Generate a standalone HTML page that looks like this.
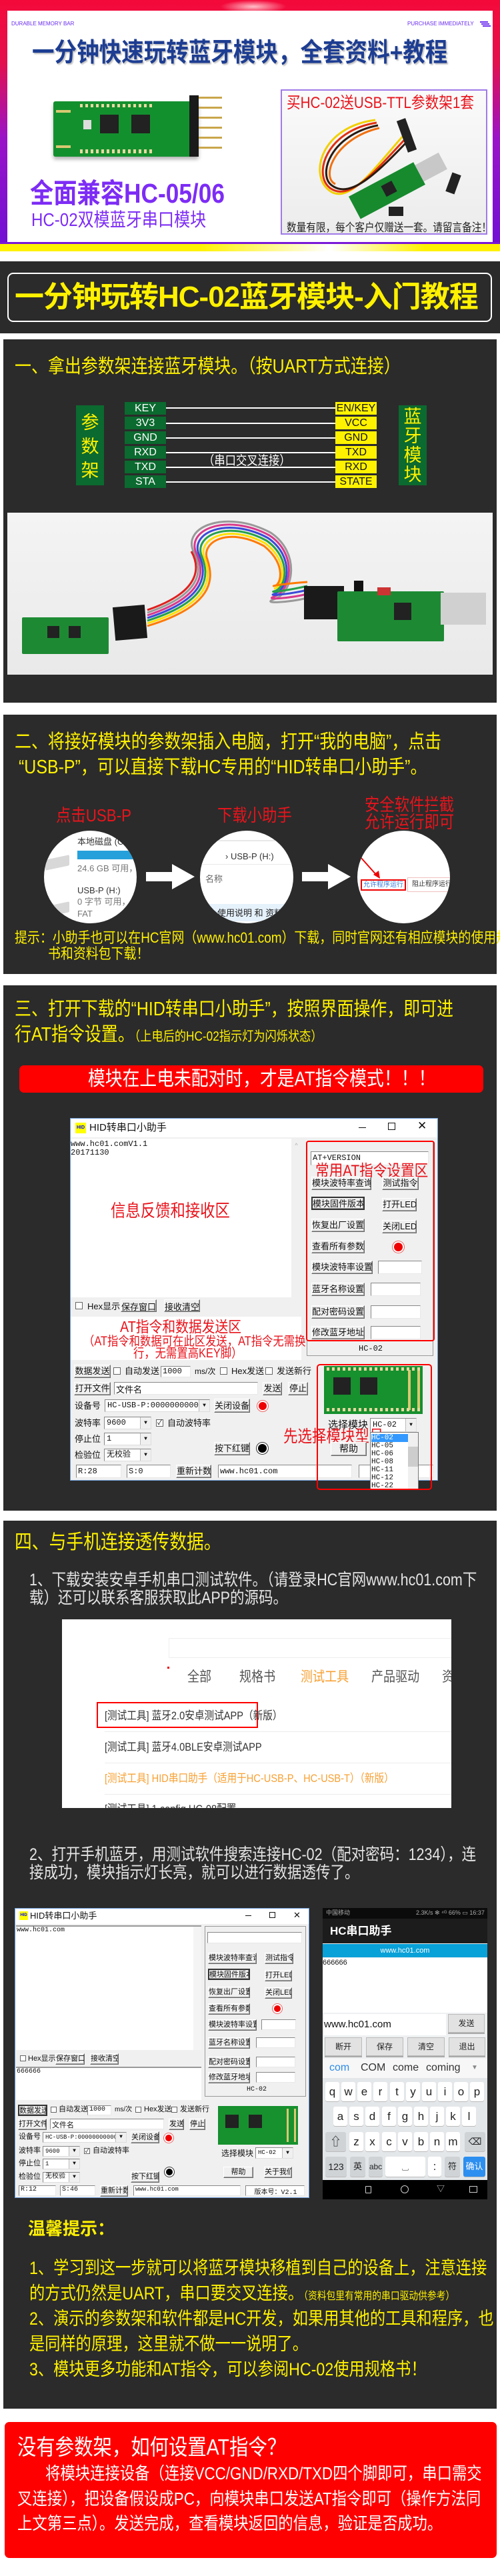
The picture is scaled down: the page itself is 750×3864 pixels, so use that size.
<!DOCTYPE html>
<html><head><meta charset="utf-8">
<style>
*{margin:0;padding:0;box-sizing:border-box}
body{width:750px;height:3864px;position:relative;background:#fff;font-family:"Liberation Sans","Noto Sans CJK SC",sans-serif;overflow:hidden}
.a{position:absolute;white-space:nowrap;line-height:1}
.s{transform:scaleX(.86);transform-origin:0 0}
.y{color:#fff100}
.dk{position:absolute;background:#2b2b2b}
.pin{position:absolute;width:62px;height:19px;font-size:16px;line-height:19px;text-align:center}
.pl{background:#0b6a2f;color:#fff}
.pr{background:#fff200;color:#111}
.ln{position:absolute;height:2px;background:#fff}
.btn{position:absolute;background:#f0f0f0;border:1px solid;border-color:#fff #6a6a6a #6a6a6a #fff;box-shadow:inset -1px -1px 0 #a0a0a0;font-size:13px;text-align:center;color:#111;white-space:nowrap;overflow:hidden}
.inp{position:absolute;background:#fff;border:1px solid;border-color:#888 #e8e8e8 #e8e8e8 #888;font-size:12px;font-family:"Liberation Mono","Noto Sans CJK SC",monospace;padding-left:2px;white-space:nowrap;overflow:hidden;color:#111}
.lb{position:absolute;font-size:13px;color:#111;white-space:nowrap;line-height:1}
.cb{position:absolute;width:11px;height:11px;background:#fff;border:1px solid #666;font-size:10px;line-height:9px;text-align:center}
.cmb{position:absolute;background:#fff;border:1px solid;border-color:#888 #ddd #ddd #888;font-size:12px;font-family:"Liberation Mono","Noto Sans CJK SC",monospace;padding-left:3px;white-space:nowrap;overflow:hidden;color:#111}
.cmb:after{content:"▼";position:absolute;right:0;top:0;bottom:0;width:15px;background:#f0f0f0;border-left:1px solid #bbb;font-size:8px;text-align:center;display:flex;align-items:center;justify-content:center}
.rd{position:absolute;border-radius:50%;background:#e00;box-shadow:0 0 0 2px #fff,0 0 0 3px #e66}
.key{position:absolute;background:#fff;border-radius:3px;box-shadow:0 1px 0 #bbb;font-size:17px;text-align:center;color:#222}
.gk{background:#cfd3d6}
.pb{position:absolute;background:#e2e2e2;border:1px solid #bbb;font-size:12px;text-align:center;color:#222;box-shadow:0 2px 0 #aaa}
</style></head><body>

<div class="a" style="left:0;top:0;width:750px;height:377px;background:linear-gradient(180deg,#f40a3a 0%,#e3104e 25%,#9a12c8 55%,#6e10d4 100%)"></div>
<div class="a" style="left:330px;top:0;width:100px;height:20px;background:radial-gradient(ellipse at center,#ffc0c8 0%,rgba(255,80,100,0) 70%)"></div>
<div class="a" style="left:0;top:363px;width:750px;height:3px;background:#7a18d8"></div>
<div class="a" style="left:0;top:366px;width:750px;height:11px;background:linear-gradient(90deg,#fff200 0%,#fff200 40%,#fff 66%,#fff200 85%,#fff200 100%)"></div>
<div class="a" style="left:11px;top:16px;width:728px;height:347px;background:#fff"></div>
<div class="a" style="left:17px;top:32px;font-size:8px;color:#6a2cf0">DURABLE MEMORY BAR</div>
<div class="a" style="left:611px;top:32px;font-size:8px;color:#6a2cf0">PURCHASE IMMEDIATELY</div>
<div class="a" style="left:720px;top:32px;width:12px;height:2px;background:#6a2cf0;box-shadow:2px 3px 0 #6a2cf0,4px 6px 0 #6a2cf0"></div>
<div class="a s" style="left:48px;top:60px;font-size:39px;font-weight:bold;color:#1d3d92;text-shadow:2px 2px 2px rgba(0,0,0,.25)">一分钟快速玩转蓝牙模块，全套资料+教程</div>

<div class="a" style="left:80px;top:152px;width:218px;height:83px;background:#13902e;border-radius:3px;box-shadow:0 4px 6px rgba(0,0,0,.3)"></div>
<div class="a" style="left:84px;top:165px;width:22px;height:57px;border:4px solid #d9c872;border-left:none;border-right:none"></div>
<div class="a" style="left:150px;top:172px;width:28px;height:28px;background:#222"></div>
<div class="a" style="left:197px;top:172px;width:28px;height:28px;background:#222"></div>
<div class="a" style="left:125px;top:180px;width:12px;height:14px;background:#ddd"></div>
<div class="a" style="left:120px;top:224px;width:110px;height:6px;background:repeating-linear-gradient(90deg,#e8d9a0 0 4px,transparent 4px 8px)"></div>
<div class="a" style="left:120px;top:156px;width:110px;height:5px;background:repeating-linear-gradient(90deg,#e8d9a0 0 4px,transparent 4px 8px)"></div>
<div class="a" style="left:284px;top:143px;width:14px;height:92px;background:#1a1a1a"></div>
<div class="a" style="left:298px;top:145px;width:35px;height:88px;background:repeating-linear-gradient(180deg,#c8a64a 0 3px,transparent 3px 15px)"></div>

<div class="a s" style="left:45px;top:270px;font-size:41px;font-weight:bold;color:#7d2cf5">全面兼容HC-05/06</div>
<div class="a s" style="left:47px;top:316px;font-size:28px;color:#7d2cf5">HC-02双模蓝牙串口模块</div>

<div class="a" style="left:421px;top:134px;width:310px;height:218px;border:2px solid #9f7ae8;background:linear-gradient(180deg,#fafafa,#ececec)"></div>
<div class="a s" style="left:430px;top:143px;font-size:24px;color:#e8141c">买HC-02送USB-TTL参数架1套</div>
<svg class="a" style="left:423px;top:170px" width="306" height="160" viewBox="0 0 306 160">
<path d="M140 10 C60 20 40 90 70 115 C100 140 140 80 185 30" fill="none" stroke="#f2d000" stroke-width="3"/>
<path d="M142 14 C66 26 46 92 72 112 C102 134 142 84 188 35" fill="none" stroke="#e03010" stroke-width="3"/>
<path d="M144 18 C72 32 52 94 76 109 C104 128 144 88 190 40" fill="none" stroke="#2a1a10" stroke-width="3"/>
<path d="M146 22 C78 38 58 96 80 106" fill="none" stroke="#f07010" stroke-width="3"/>
<rect x="180" y="8" width="14" height="50" fill="#222" transform="rotate(-20 187 33)"/>
<g transform="rotate(-28 160 110)"><rect x="100" y="95" width="110" height="38" fill="#178a2e"/><rect x="210" y="100" width="40" height="28" fill="#c8c8c8"/><rect x="150" y="104" width="18" height="18" fill="#222"/></g>
<rect x="250" y="90" width="14" height="30" fill="#222" transform="rotate(20 257 105)"/>
<rect x="160" y="140" width="22" height="14" fill="#222"/>
</svg>
<div class="a s" style="left:430px;top:333px;font-size:17px;color:#222">数量有限，每个客户仅赠送一套。请留言备注！</div>

<div class="dk" style="left:0;top:392px;width:750px;height:108px"></div>
<div class="a" style="left:11px;top:409px;width:727px;height:74px;border:2px solid #fff;border-radius:9px"></div>
<div class="a" style="left:22px;top:424px;font-size:44px;font-weight:bold;color:#fff100;letter-spacing:-1px">一分钟玩转HC-02蓝牙模块-入门教程</div>

<div class="dk" style="left:5px;top:509px;width:740px;height:545px"></div>
<div class="a s y" style="left:22px;top:536px;font-size:29px">一、拿出参数架连接蓝牙模块。（按UART方式连接）</div>
<div class="a" style="left:114px;top:608px;width:42px;height:120px;background:#0b6a2f;color:#fff100;font-size:27px;line-height:36px;text-align:center;padding-top:8px;white-space:normal">参<br>数<br>架</div>
<div class="a" style="left:598px;top:608px;width:42px;height:120px;background:#0b6a2f;color:#fff100;font-size:27px;line-height:29px;text-align:center;padding-top:3px;white-space:normal">蓝<br>牙<br>模<br>块</div>
<div class="pin pl" style="left:187px;top:603px">KEY</div>
<div class="pin pl" style="left:187px;top:625px">3V3</div>
<div class="pin pl" style="left:187px;top:647px">GND</div>
<div class="pin pl" style="left:187px;top:669px">RXD</div>
<div class="pin pl" style="left:187px;top:691px">TXD</div>
<div class="pin pl" style="left:187px;top:713px">STA</div>
<div class="pin pr" style="left:503px;top:603px">EN/KEY</div>
<div class="pin pr" style="left:503px;top:625px">VCC</div>
<div class="pin pr" style="left:503px;top:647px">GND</div>
<div class="pin pr" style="left:503px;top:669px">TXD</div>
<div class="pin pr" style="left:503px;top:691px">RXD</div>
<div class="pin pr" style="left:503px;top:713px">STATE</div>
<div class="ln" style="left:249px;top:611px;width:254px"></div>
<div class="ln" style="left:249px;top:634px;width:254px"></div>
<div class="ln" style="left:249px;top:656px;width:254px"></div>
<div class="ln" style="left:249px;top:678px;width:254px"></div>
<div class="ln" style="left:249px;top:700px;width:254px"></div>
<div class="ln" style="left:249px;top:722px;width:254px"></div>
<div class="a s" style="left:305px;top:682px;font-size:19px;color:#fff">（串口交叉连接）</div>

<div class="a" style="left:11px;top:769px;width:728px;height:243px;background:linear-gradient(180deg,#f4f4f4,#e9e9e9)"></div>
<svg class="a" style="left:11px;top:769px" width="728" height="243" viewBox="0 0 728 243">
<g fill="none" stroke-width="3">
<path d="M210 150 C300 120 290 80 280 60 C260 20 330 -5 395 30 C440 60 430 120 400 130 C380 137 420 135 450 128" stroke="#999"/>
<path d="M210 154 C302 124 294 84 284 62 C266 25 330 0 393 34 C436 62 426 118 400 126 C385 131 420 129 450 122" stroke="#d8398c"/>
<path d="M210 158 C304 128 298 88 288 64 C272 30 330 5 391 38 C432 66 422 116 400 122 C390 125 420 123 450 116" stroke="#3a4ad8"/>
<path d="M210 162 C306 132 302 92 292 66 C278 35 330 10 389 42 C428 70 418 114 400 118 C392 120 420 117 450 110" stroke="#26a04a"/>
<path d="M210 166 C308 136 306 96 296 68 C284 40 330 15 387 46 C424 74 414 112 400 114" stroke="#ffe000"/>
<path d="M210 170 C310 140 310 100 300 70 C290 45 330 20 385 50 C420 78 410 110 400 110 C395 110 420 106 450 104" stroke="#ff7a00"/>
<path d="M210 146 C298 116 286 76 276 58" stroke="#e02020"/>
</g>
<rect x="22" y="157" width="130" height="55" rx="2" fill="#1d8a33"/>
<rect x="60" y="170" width="18" height="18" fill="#222"/><rect x="92" y="170" width="18" height="18" fill="#222"/>
<rect x="160" y="140" width="48" height="50" fill="#1a1a1a" transform="rotate(-5 184 165)"/>
<rect x="445" y="110" width="60" height="50" fill="#1a1a1a"/>
<rect x="520" y="102" width="14" height="70" fill="#111"/>
<rect x="495" y="118" width="160" height="75" rx="2" fill="#1d8a33"/>
<rect x="580" y="135" width="26" height="26" fill="#222"/>
<rect x="555" y="112" width="20" height="12" fill="#c33"/>
<rect x="650" y="120" width="68" height="48" fill="#d0d0d0"/>
</svg>

<div class="dk" style="left:5px;top:1072px;width:740px;height:389px"></div>
<div class="a s y" style="left:22px;top:1099px;font-size:29px">二、将接好模块的参数架插入电脑，打开“我的电脑”，点击</div>
<div class="a s y" style="left:28px;top:1137px;font-size:29px">“USB-P”，可以直接下载HC专用的“HID转串口小助手”。</div>
<div class="a s" style="left:84px;top:1210px;font-size:26px;color:#e8141c">点击USB-P</div>
<div class="a s" style="left:326px;top:1210px;font-size:26px;color:#e8141c">下载小助手</div>
<div class="a s" style="left:547px;top:1194px;font-size:26px;color:#e8141c">安全软件拦截</div>
<div class="a s" style="left:547px;top:1220px;font-size:26px;color:#e8141c">允许运行即可</div>
<div class="a" style="left:66px;top:1246px;width:139px;height:139px;border-radius:50%;background:#fff;overflow:hidden">
 <div class="a" style="left:50px;top:10px;font-size:13px;color:#333">本地磁盘 (C:)</div>
 <div class="a" style="left:50px;top:30px;width:90px;height:13px;background:#26a0da"></div>
 <div class="a" style="left:50px;top:50px;font-size:13px;color:#777">24.6 GB 可用，共</div>
 <div class="a" style="left:50px;top:83px;font-size:13px;color:#333">USB-P (H:)</div>
 <div class="a" style="left:50px;top:100px;font-size:13px;color:#777">0 字节 可用，共</div>
 <div class="a" style="left:50px;top:118px;font-size:13px;color:#777">FAT</div>
 <div class="a" style="left:2px;top:40px;width:36px;height:16px;background:#d8d8d8;border-radius:2px;transform:skewY(-12deg)"></div>
 <div class="a" style="left:2px;top:110px;width:36px;height:16px;background:#d8d8d8;border-radius:2px;transform:skewY(-12deg)"></div>
</div>
<div class="a" style="left:300px;top:1246px;width:140px;height:139px;border-radius:50%;background:#fff;overflow:hidden">
 <div class="a" style="left:0;top:14px;width:140px;height:2px;background:#e8e8e8"></div>
 <div class="a" style="left:38px;top:32px;font-size:13px;color:#333">› USB-P (H:)</div>
 <div class="a" style="left:0;top:50px;width:140px;height:1px;background:#e8e8e8"></div>
 <div class="a" style="left:8px;top:66px;font-size:13px;color:#666">名称</div>
 <div class="a" style="left:0;top:110px;width:140px;height:26px;background:#e5f1fb"></div>
 <div class="a" style="left:26px;top:117px;font-size:13px;color:#222">使用说明 和 资料下载</div>
</div>
<div class="a" style="left:536px;top:1246px;width:139px;height:139px;border-radius:50%;background:#fff;overflow:hidden">
 <div class="a" style="left:5px;top:73px;width:68px;height:17px;border:2px solid #e00;font-size:10px;color:#3a7ad8;text-align:center;line-height:13px">允许程序运行</div>
 <div class="a" style="left:75px;top:70px;width:70px;height:22px;border:1px solid #f0c0c0;font-size:10px;color:#333;padding:5px 0 0 6px">阻止程序运行</div>
 <svg class="a" style="left:0;top:0" width="139" height="139"><line x1="5" y1="40" x2="30" y2="68" stroke="#e00" stroke-width="2"/><polygon points="24,66 34,72 32,60" fill="#e00"/></svg>
</div>
<svg class="a" style="left:219px;top:1296px" width="75" height="40"><polygon points="0,12 39,12 39,0 73,19 39,38 39,26 0,26" fill="#fff"/></svg>
<svg class="a" style="left:453px;top:1296px" width="75" height="40"><polygon points="0,12 39,12 39,0 73,19 39,38 39,26 0,26" fill="#fff"/></svg>
<div class="a s y" style="left:22px;top:1396px;font-size:22px">提示：小助手也可以在HC官网（www.hc01.com）下载，同时官网还有相应模块的使用规格</div>
<div class="a s y" style="left:72px;top:1420px;font-size:22px">书和资料包下载！</div>

<div class="dk" style="left:5px;top:1478px;width:740px;height:788px"></div>
<div class="a s y" style="left:22px;top:1500px;font-size:29px">三、打开下载的“HID转串口小助手”，按照界面操作，即可进</div>
<div class="a s y" style="left:22px;top:1538px;font-size:29px">行AT指令设置。<span style="font-size:20px">（上电后的HC-02指示灯为闪烁状态）</span></div>
<div class="a" style="left:29px;top:1598px;width:696px;height:41px;background:#fe0000;border-radius:7px"></div>
<div class="a s" style="left:132px;top:1604px;font-size:30px;color:#fff">模块在上电未配对时，才是AT指令模式！！！</div>

<div class="a" style="left:105px;top:1677px;width:552px;height:544px;background:#f0f0f0;border:1px solid #6f9fd8"></div>
<div class="a" style="left:106px;top:1678px;width:550px;height:28px;background:#fff"></div>
<div class="a" style="left:113px;top:1684px;width:16px;height:16px;background:#ff0;color:#00f;font-size:7px;line-height:16px;text-align:center;font-weight:bold">HID</div>
<div class="a" style="left:134px;top:1684px;font-size:15px;color:#111">HID转串口小助手</div>
<div class="a" style="left:538px;top:1691px;width:11px;height:1px;background:#111"></div>
<div class="a" style="left:582px;top:1684px;width:11px;height:11px;border:1px solid #111"></div>
<div class="a" style="left:626px;top:1680px;font-size:17px;color:#111">✕</div>
<div class="a" style="left:106px;top:1708px;width:346px;height:238px;background:#fff"></div>
<div class="a" style="left:437px;top:1708px;width:15px;height:238px;background:#f0f0f0;font-size:9px;color:#aaa;text-align:center;padding-top:6px">^</div>
<div class="a" style="left:106px;top:1710px;font-size:12px;font-family:'Liberation Mono',monospace;color:#111;line-height:13px;white-space:pre">www.hc01.comV1.1
20171130</div>
<div class="a s" style="left:166px;top:1803px;font-size:26px;color:#e8141c">信息反馈和接收区</div>
<div class="cb" style="left:113px;top:1953px"></div>
<div class="lb" style="left:131px;top:1953px">Hex显示</div>
<div class="btn" style="left:181px;top:1949px;width:54px;height:19px">保存窗口</div>
<div class="btn" style="left:246px;top:1949px;width:54px;height:19px">接收清空</div>
<div class="a" style="left:106px;top:1975px;width:346px;height:65px;background:#fff"></div>
<div class="a s" style="left:180px;top:1979px;font-size:23px;color:#e8141c">AT指令和数据发送区</div>
<div class="a s" style="left:125px;top:2003px;font-size:19px;color:#e8141c">（AT指令和数据可在此区发送，AT指令无需换</div>
<div class="a s" style="left:200px;top:2021px;font-size:19px;color:#e8141c">行，无需置高KEY脚）</div>

<div class="a" style="left:460px;top:1712px;width:190px;height:322px;border:1px solid #999"></div>
<div class="a" style="left:459px;top:1711px;width:193px;height:301px;border:2px solid #f00;border-radius:4px"></div>
<div class="inp" style="left:466px;top:1727px;width:177px;height:21px;line-height:19px">AT+VERSION</div>
<div class="a s" style="left:473px;top:1745px;font-size:24px;color:#e8141c">常用AT指令设置区</div>
<div class="btn" style="left:467px;top:1765px;width:90px;height:20px;line-height:18px">模块波特率查询</div>
<div class="btn" style="left:573px;top:1765px;width:55px;height:20px;line-height:18px">测试指令</div>
<div class="btn" style="left:467px;top:1795px;width:80px;height:20px;line-height:18px;border:2px solid #333">模块固件版本</div>
<div class="btn" style="left:573px;top:1797px;width:52px;height:20px;line-height:18px">打开LED</div>
<div class="btn" style="left:467px;top:1828px;width:80px;height:20px;line-height:18px">恢复出厂设置</div>
<div class="btn" style="left:573px;top:1830px;width:52px;height:20px;line-height:18px">关闭LED</div>
<div class="btn" style="left:467px;top:1860px;width:80px;height:20px;line-height:18px">查看所有参数</div>
<div class="rd" style="left:591px;top:1864px;width:13px;height:13px"></div>
<div class="btn" style="left:467px;top:1891px;width:92px;height:20px;line-height:18px">模块波特率设置</div>
<div class="inp" style="left:567px;top:1891px;width:66px;height:20px"></div>
<div class="btn" style="left:467px;top:1924px;width:80px;height:20px;line-height:18px">蓝牙名称设置</div>
<div class="inp" style="left:556px;top:1924px;width:75px;height:20px"></div>
<div class="btn" style="left:467px;top:1958px;width:80px;height:20px;line-height:18px">配对密码设置</div>
<div class="inp" style="left:556px;top:1958px;width:75px;height:20px"></div>
<div class="btn" style="left:467px;top:1989px;width:80px;height:20px;line-height:18px">修改蓝牙地址</div>
<div class="inp" style="left:556px;top:1989px;width:75px;height:20px"></div>
<div class="lb" style="left:538px;top:2017px;font-family:'Liberation Mono',monospace;font-size:12px">HC-02</div>

<div class="btn" style="left:111px;top:2047px;width:55px;height:20px;line-height:18px">数据发送</div>
<div class="cb" style="left:170px;top:2051px"></div>
<div class="lb" style="left:187px;top:2050px">自动发送</div>
<div class="inp" style="left:241px;top:2049px;width:45px;height:17px">1000</div>
<div class="lb" style="left:292px;top:2051px;font-size:12px">ms/次</div>
<div class="cb" style="left:330px;top:2051px"></div>
<div class="lb" style="left:347px;top:2050px">Hex发送</div>
<div class="cb" style="left:398px;top:2051px"></div>
<div class="lb" style="left:415px;top:2050px">发送新行</div>
<div class="btn" style="left:111px;top:2073px;width:55px;height:20px;line-height:18px">打开文件</div>
<div class="inp" style="left:171px;top:2073px;width:216px;height:19px;font-size:13px">文件名</div>
<div class="btn" style="left:394px;top:2073px;width:29px;height:20px;line-height:18px">发送</div>
<div class="btn" style="left:432px;top:2073px;width:30px;height:20px;line-height:18px">停止</div>
<div class="lb" style="left:112px;top:2102px">设备号</div>
<div class="cmb" style="left:157px;top:2099px;width:158px;height:19px;line-height:17px">HC-USB-P:000000000007</div>
<div class="btn" style="left:321px;top:2098px;width:54px;height:21px;line-height:19px">关闭设备</div>
<div class="rd" style="left:388px;top:2103px;width:12px;height:12px"></div>
<div class="lb" style="left:112px;top:2128px">波特率</div>
<div class="cmb" style="left:156px;top:2125px;width:71px;height:19px;line-height:17px">9600</div>
<div class="cb" style="left:234px;top:2129px">✓</div>
<div class="lb" style="left:251px;top:2128px">自动波特率</div>
<div class="lb" style="left:112px;top:2152px">停止位</div>
<div class="cmb" style="left:156px;top:2149px;width:71px;height:19px;line-height:17px">1</div>
<div class="lb" style="left:112px;top:2176px">检验位</div>
<div class="cmb" style="left:156px;top:2173px;width:71px;height:19px;line-height:17px">无校验</div>
<div class="btn" style="left:321px;top:2163px;width:54px;height:20px;line-height:18px">按下红键</div>
<div class="a" style="left:387px;top:2166px;width:13px;height:13px;border-radius:50%;background:#000;box-shadow:0 0 0 2px #fff,0 0 0 3px #333"></div>
<div class="inp" style="left:114px;top:2197px;width:68px;height:20px;line-height:18px">R:28</div>
<div class="inp" style="left:190px;top:2197px;width:66px;height:20px;line-height:18px">S:0</div>
<div class="btn" style="left:264px;top:2197px;width:53px;height:20px;line-height:18px">重新计数</div>
<div class="inp" style="left:327px;top:2197px;width:201px;height:20px;line-height:18px">www.hc01.com</div>
<div class="inp" style="left:538px;top:2197px;width:112px;height:20px"></div>
<div class="a" style="left:486px;top:2049px;width:148px;height:72px;background:#17902e"></div>
<div class="a" style="left:500px;top:2066px;width:26px;height:26px;background:#222"></div>
<div class="a" style="left:540px;top:2066px;width:26px;height:26px;background:#222"></div>
<div class="a" style="left:612px;top:2055px;width:18px;height:60px;border:4px solid #d9c872;border-top:none;border-bottom:none"></div>
<div class="a" style="left:490px;top:2051px;width:140px;height:5px;background:repeating-linear-gradient(90deg,#e8d9a0 0 4px,transparent 4px 8px)"></div>
<div class="a" style="left:490px;top:2112px;width:140px;height:5px;background:repeating-linear-gradient(90deg,#e8d9a0 0 4px,transparent 4px 8px)"></div>
<div class="lb" style="left:492px;top:2130px;font-size:15px">选择模块</div>
<div class="cmb" style="left:555px;top:2127px;width:70px;height:21px;line-height:19px">HC-02</div>
<div class="a s" style="left:425px;top:2143px;font-size:25px;color:#e8141c">先选择模块型号</div>
<div class="btn" style="left:496px;top:2163px;width:54px;height:21px;line-height:19px;font-size:14px">帮助</div>
<div class="a" style="left:555px;top:2148px;width:73px;height:86px;background:#fff;border:1px solid #777;font-family:'Liberation Mono',monospace;font-size:11px;line-height:12px;padding:2px 0 0 1px;white-space:pre;color:#111"><span style="background:#3399ff;color:#fff;display:inline-block;width:55px">HC-02</span>
HC-05
HC-06
HC-08
HC-11
HC-12
HC-22</div>
<div class="a" style="left:612px;top:2149px;width:15px;height:84px;background:#f0f0f0"></div>
<div class="a" style="left:612px;top:2170px;width:15px;height:30px;background:#cdcdcd"></div>
<div class="a" style="left:475px;top:2046px;width:173px;height:189px;border:2px solid #f00;border-radius:5px"></div>

<div class="dk" style="left:5px;top:2281px;width:740px;height:1332px"></div>
<div class="a s y" style="left:22px;top:2299px;font-size:30px">四、与手机连接透传数据。</div>
<div class="a s" style="left:44px;top:2358px;font-size:25px;color:#e4e4e4">1、下载安装安卓手机串口测试软件。（请登录HC官网www.hc01.com下</div>
<div class="a s" style="left:44px;top:2385px;font-size:25px;color:#e4e4e4">载）还可以联系客服获取此APP的源码。</div>
<div class="a" style="left:93px;top:2429px;width:584px;height:283px;background:#fff;overflow:hidden">
 <div class="a" style="left:160px;top:28px;width:430px;height:30px;border:1px solid #eee"></div>
 <div class="a" style="left:158px;top:71px;width:3px;height:3px;background:#e00"></div>
 <div class="a s" style="left:188px;top:76px;font-size:21px;color:#555">全部</div>
 <div class="a s" style="left:266px;top:76px;font-size:21px;color:#555">规格书</div>
 <div class="a s" style="left:358px;top:76px;font-size:21px;color:#f7a033">测试工具</div>
 <div class="a s" style="left:464px;top:76px;font-size:21px;color:#555">产品驱动</div>
 <div class="a s" style="left:570px;top:76px;font-size:21px;color:#555">资</div>
 <div class="a" style="left:52px;top:124px;width:242px;height:39px;border:2px solid #f00"></div>
 <div class="a s" style="left:64px;top:136px;font-size:17px;color:#333">[测试工具] 蓝牙2.0安卓测试APP（新版）</div>
 <div class="a" style="left:64px;top:168px;width:520px;height:1px;background:#ececec"></div>
 <div class="a s" style="left:64px;top:183px;font-size:17px;color:#333">[测试工具] 蓝牙4.0BLE安卓测试APP</div>
 <div class="a" style="left:64px;top:215px;width:520px;height:1px;background:#ececec"></div>
 <div class="a s" style="left:64px;top:230px;font-size:17px;color:#f7a033">[测试工具] HID串口助手（适用于HC-USB-P、HC-USB-T）（新版）</div>
 <div class="a" style="left:64px;top:262px;width:520px;height:1px;background:#ececec"></div>
 <div class="a s" style="left:64px;top:276px;font-size:17px;color:#333">[测试工具] 1.config HC-08配置</div>
</div>
<div class="a s" style="left:44px;top:2770px;font-size:25px;color:#e4e4e4">2、打开手机蓝牙，用测试软件搜索连接HC-02（配对密码：1234），连</div>
<div class="a s" style="left:44px;top:2797px;font-size:25px;color:#e4e4e4">接成功，模块指示灯长亮，就可以进行数据透传了。</div>

<div class="a" style="left:22px;top:2862px;width:442px;height:435px;background:#f0f0f0;border:1px solid #6f9fd8"></div>
<div class="a" style="left:23px;top:2863px;width:440px;height:23px;background:#fff"></div>
<div class="a" style="left:29px;top:2867px;width:13px;height:13px;background:#ff0;color:#00f;font-size:6px;line-height:13px;text-align:center;font-weight:bold">HID</div>
<div class="a" style="left:45px;top:2867px;font-size:13px;color:#111">HID转串口小助手</div>
<div class="a" style="left:368px;top:2873px;width:9px;height:1px;background:#111"></div>
<div class="a" style="left:404px;top:2868px;width:9px;height:9px;border:1px solid #111"></div>
<div class="a" style="left:440px;top:2866px;font-size:13px;color:#111">✕</div>
<div class="a" style="left:24px;top:2888px;width:278px;height:187px;background:#fff;border-top:2px solid #999"></div>
<div class="a" style="left:290px;top:2890px;width:12px;height:185px;background:#f4f4f4"></div>
<div class="a" style="left:25px;top:2891px;font-size:10px;font-family:'Liberation Mono',monospace;color:#111">www.hc01.com</div>
<div class="cb" style="left:30px;top:3083px;width:9px;height:9px"></div>
<div class="lb" style="left:42px;top:3083px;font-size:11px">Hex显示</div>
<div class="btn" style="left:83px;top:3080px;width:44px;height:17px;font-size:11px;line-height:15px">保存窗口</div>
<div class="btn" style="left:135px;top:3080px;width:43px;height:17px;font-size:11px;line-height:15px">接收清空</div>
<div class="a" style="left:24px;top:3100px;width:278px;height:50px;background:#fff;border-top:2px solid #999"></div>
<div class="a" style="left:25px;top:3103px;font-size:10px;font-family:'Liberation Mono',monospace;color:#111">666666</div>
<div class="a" style="left:307px;top:2889px;width:152px;height:256px;border:1px solid #999"></div>
<div class="inp" style="left:311px;top:2898px;width:142px;height:17px"></div>
<div class="btn" style="left:312px;top:2929px;width:73px;height:17px;font-size:11px;line-height:15px">模块波特率查询</div>
<div class="btn" style="left:397px;top:2929px;width:43px;height:17px;font-size:11px;line-height:15px">测试指令</div>
<div class="btn" style="left:312px;top:2953px;width:63px;height:17px;font-size:11px;line-height:14px;border:2px solid #333">模块固件版本</div>
<div class="btn" style="left:397px;top:2955px;width:41px;height:17px;font-size:11px;line-height:15px">打开LED</div>
<div class="btn" style="left:312px;top:2980px;width:63px;height:17px;font-size:11px;line-height:15px">恢复出厂设置</div>
<div class="btn" style="left:397px;top:2981px;width:41px;height:17px;font-size:11px;line-height:15px">关闭LED</div>
<div class="btn" style="left:312px;top:3005px;width:63px;height:17px;font-size:11px;line-height:15px">查看所有参数</div>
<div class="rd" style="left:411px;top:3008px;width:10px;height:10px"></div>
<div class="btn" style="left:312px;top:3029px;width:73px;height:17px;font-size:11px;line-height:15px">模块波特率设置</div>
<div class="inp" style="left:392px;top:3029px;width:52px;height:16px"></div>
<div class="btn" style="left:312px;top:3056px;width:63px;height:17px;font-size:11px;line-height:15px">蓝牙名称设置</div>
<div class="inp" style="left:384px;top:3056px;width:59px;height:16px"></div>
<div class="btn" style="left:312px;top:3085px;width:63px;height:17px;font-size:11px;line-height:15px">配对密码设置</div>
<div class="inp" style="left:384px;top:3085px;width:59px;height:16px"></div>
<div class="btn" style="left:312px;top:3108px;width:63px;height:17px;font-size:11px;line-height:15px">修改蓝牙地址</div>
<div class="inp" style="left:384px;top:3108px;width:59px;height:16px"></div>
<div class="lb" style="left:370px;top:3130px;font-size:10px;font-family:'Liberation Mono',monospace">HC-02</div>
<div class="btn" style="left:27px;top:3157px;width:44px;height:17px;font-size:11px;line-height:14px;border:2px solid #333">数据发送</div>
<div class="cb" style="left:76px;top:3160px;width:9px;height:9px"></div>
<div class="lb" style="left:88px;top:3159px;font-size:11px">自动发送</div>
<div class="inp" style="left:131px;top:3158px;width:36px;height:15px;font-size:10px">1000</div>
<div class="lb" style="left:172px;top:3160px;font-size:10px">ms/次</div>
<div class="cb" style="left:203px;top:3160px;width:9px;height:9px"></div>
<div class="lb" style="left:216px;top:3159px;font-size:11px">Hex发送</div>
<div class="cb" style="left:257px;top:3160px;width:9px;height:9px"></div>
<div class="lb" style="left:270px;top:3159px;font-size:11px">发送新行</div>
<div class="btn" style="left:27px;top:3178px;width:43px;height:17px;font-size:11px;line-height:15px">打开文件</div>
<div class="inp" style="left:75px;top:3178px;width:171px;height:16px;font-size:11px">文件名</div>
<div class="btn" style="left:253px;top:3178px;width:23px;height:17px;font-size:11px;line-height:15px">发送</div>
<div class="btn" style="left:284px;top:3178px;width:24px;height:17px;font-size:11px;line-height:15px">停止</div>
<div class="lb" style="left:28px;top:3200px;font-size:11px">设备号</div>
<div class="cmb" style="left:64px;top:3198px;width:126px;height:16px;font-size:9px;line-height:14px">HC-USB-P:000000000007</div>
<div class="btn" style="left:196px;top:3197px;width:43px;height:18px;font-size:11px;line-height:16px">关闭设备</div>
<div class="rd" style="left:248px;top:3202px;width:10px;height:10px"></div>
<div class="lb" style="left:28px;top:3221px;font-size:11px">波特率</div>
<div class="cmb" style="left:64px;top:3219px;width:56px;height:16px;font-size:9px;line-height:14px">9600</div>
<div class="cb" style="left:126px;top:3222px;width:9px;height:9px;font-size:8px;line-height:7px">✓</div>
<div class="lb" style="left:139px;top:3221px;font-size:11px">自动波特率</div>
<div class="lb" style="left:28px;top:3240px;font-size:11px">停止位</div>
<div class="cmb" style="left:64px;top:3238px;width:56px;height:16px;font-size:9px;line-height:14px">1</div>
<div class="lb" style="left:28px;top:3260px;font-size:11px">检验位</div>
<div class="cmb" style="left:64px;top:3258px;width:56px;height:16px;font-size:10px;line-height:14px">无校验</div>
<div class="btn" style="left:196px;top:3257px;width:43px;height:17px;font-size:11px;line-height:15px">按下红键</div>
<div class="a" style="left:249px;top:3253px;width:10px;height:10px;border-radius:50%;background:#000;box-shadow:0 0 0 2px #fff,0 0 0 3px #333"></div>
<div class="a" style="left:327px;top:3159px;width:120px;height:58px;background:#17902e"></div>
<div class="a" style="left:338px;top:3172px;width:20px;height:20px;background:#222"></div>
<div class="a" style="left:373px;top:3172px;width:20px;height:20px;background:#222"></div>
<div class="a" style="left:430px;top:3163px;width:14px;height:50px;border:3px solid #d9c872;border-top:none;border-bottom:none"></div>
<div class="lb" style="left:332px;top:3224px;font-size:12px">选择模块</div>
<div class="cmb" style="left:383px;top:3221px;width:57px;height:17px;font-size:9px;line-height:15px">HC-02</div>
<div class="btn" style="left:335px;top:3250px;width:45px;height:17px;font-size:11px;line-height:15px">帮助</div>
<div class="btn" style="left:396px;top:3250px;width:42px;height:17px;font-size:11px;line-height:15px">关于我们</div>
<div class="inp" style="left:28px;top:3278px;width:56px;height:16px;font-size:10px">R:12</div>
<div class="inp" style="left:90px;top:3278px;width:53px;height:16px;font-size:10px">S:46</div>
<div class="btn" style="left:150px;top:3278px;width:42px;height:17px;font-size:11px;line-height:15px">重新计数</div>
<div class="inp" style="left:200px;top:3278px;width:161px;height:16px;font-size:9px">www.hc01.com</div>
<div class="inp" style="left:368px;top:3278px;width:89px;height:16px;font-size:10px;text-align:center">版本号：V2.1</div>

<div class="a" style="left:484px;top:2862px;width:247px;height:437px;background:#eef0f1"></div>
<div class="a" style="left:484px;top:2862px;width:247px;height:16px;background:#0b0b0b"></div>
<div class="a" style="left:489px;top:2865px;font-size:9px;color:#aaa">中国移动</div>
<div class="a" style="left:624px;top:2865px;font-size:9px;color:#aaa">2.3K/s ✻ ⁴ᴳ 66% ▭ 16:37</div>
<div class="a" style="left:484px;top:2878px;width:247px;height:37px;background:#1c1c1c"></div>
<div class="a" style="left:495px;top:2888px;font-size:17px;font-weight:bold;color:#fff">HC串口助手</div>
<div class="a" style="left:484px;top:2916px;width:247px;height:20px;background:#08a1d8;color:#fff;font-size:11px;text-align:center;line-height:20px">www.hc01.com</div>
<div class="a" style="left:484px;top:2937px;width:247px;height:82px;background:#fff"></div>
<div class="a" style="left:484px;top:2939px;font-size:11px;color:#111">666666</div>
<div class="a" style="left:486px;top:3021px;width:183px;height:32px;background:#fff;font-size:15px;color:#111;line-height:32px">www.hc01.com</div>
<div class="pb" style="left:672px;top:3021px;width:55px;height:28px;line-height:26px">发送</div>
<div class="pb" style="left:487px;top:3056px;width:56px;height:28px;line-height:26px">断开</div>
<div class="pb" style="left:549px;top:3056px;width:56px;height:28px;line-height:26px">保存</div>
<div class="pb" style="left:611px;top:3056px;width:56px;height:28px;line-height:26px">清空</div>
<div class="pb" style="left:673px;top:3056px;width:55px;height:28px;line-height:26px">退出</div>
<div class="a" style="left:484px;top:3088px;width:247px;height:29px;background:#f7f7f7"></div>
<div class="a" style="left:494px;top:3094px;font-size:16px;color:#2c8be8">com</div>
<div class="a" style="left:541px;top:3094px;font-size:16px;color:#333">COM</div>
<div class="a" style="left:589px;top:3094px;font-size:16px;color:#333">come</div>
<div class="a" style="left:639px;top:3094px;font-size:16px;color:#333">coming</div>
<div class="a" style="left:707px;top:3097px;font-size:10px;color:#888">▼</div>
<div class="a" style="left:484px;top:3117px;width:247px;height:153px;background:#e4e7e9"></div>
<div class="key" style="left:488px;top:3123px;width:21px;height:29px;line-height:29px">q</div>
<div class="key" style="left:512px;top:3123px;width:21px;height:29px;line-height:29px">w</div>
<div class="key" style="left:536px;top:3123px;width:21px;height:29px;line-height:29px">e</div>
<div class="key" style="left:560px;top:3123px;width:21px;height:29px;line-height:29px">r</div>
<div class="key" style="left:585px;top:3123px;width:21px;height:29px;line-height:29px">t</div>
<div class="key" style="left:609px;top:3123px;width:21px;height:29px;line-height:29px">y</div>
<div class="key" style="left:633px;top:3123px;width:21px;height:29px;line-height:29px">u</div>
<div class="key" style="left:657px;top:3123px;width:21px;height:29px;line-height:29px">i</div>
<div class="key" style="left:681px;top:3123px;width:21px;height:29px;line-height:29px">o</div>
<div class="key" style="left:705px;top:3123px;width:21px;height:29px;line-height:29px">p</div>
<div class="key" style="left:500px;top:3160px;width:21px;height:29px;line-height:29px">a</div>
<div class="key" style="left:524px;top:3160px;width:21px;height:29px;line-height:29px">s</div>
<div class="key" style="left:548px;top:3160px;width:21px;height:29px;line-height:29px">d</div>
<div class="key" style="left:573px;top:3160px;width:21px;height:29px;line-height:29px">f</div>
<div class="key" style="left:597px;top:3160px;width:21px;height:29px;line-height:29px">g</div>
<div class="key" style="left:621px;top:3160px;width:21px;height:29px;line-height:29px">h</div>
<div class="key" style="left:645px;top:3160px;width:21px;height:29px;line-height:29px">j</div>
<div class="key" style="left:669px;top:3160px;width:21px;height:29px;line-height:29px">k</div>
<div class="key" style="left:693px;top:3160px;width:21px;height:29px;line-height:29px">l</div>
<div class="key gk" style="left:488px;top:3198px;width:31px;height:29px;line-height:29px">⇧</div>
<div class="key" style="left:524px;top:3198px;width:21px;height:29px;line-height:29px">z</div>
<div class="key" style="left:548px;top:3198px;width:21px;height:29px;line-height:29px">x</div>
<div class="key" style="left:573px;top:3198px;width:21px;height:29px;line-height:29px">c</div>
<div class="key" style="left:597px;top:3198px;width:21px;height:29px;line-height:29px">v</div>
<div class="key" style="left:621px;top:3198px;width:21px;height:29px;line-height:29px">b</div>
<div class="key" style="left:645px;top:3198px;width:21px;height:29px;line-height:29px">n</div>
<div class="key" style="left:669px;top:3198px;width:21px;height:29px;line-height:29px">m</div>
<div class="key gk" style="left:697px;top:3198px;width:31px;height:29px;line-height:29px;font-size:14px">⌫</div>
<div class="key gk" style="left:488px;top:3235px;width:32px;height:30px;line-height:30px;font-size:14px">123</div>
<div class="key gk" style="left:525px;top:3235px;width:23px;height:30px;line-height:30px;font-size:13px">英</div>
<div class="key gk" style="left:553px;top:3235px;width:21px;height:30px;line-height:30px;font-size:12px">abc</div>
<div class="key" style="left:578px;top:3235px;width:60px;height:30px;line-height:30px;font-size:12px">␣</div>
<div class="key" style="left:642px;top:3235px;width:20px;height:30px;line-height:30px">:</div>
<div class="key gk" style="left:667px;top:3235px;width:23px;height:30px;line-height:30px;font-size:13px">符</div>
<div class="key" style="left:695px;top:3235px;width:33px;height:30px;line-height:30px;font-size:13px;background:#2d8ff0;color:#fff">确认</div>
<div class="a" style="left:484px;top:3270px;width:247px;height:29px;background:#000"></div>
<div class="a" style="left:548px;top:3279px;width:9px;height:11px;border:1px solid #ccc;border-radius:1px"></div>
<div class="a" style="left:601px;top:3278px;width:12px;height:12px;border:1px solid #ccc;border-radius:50%"></div>
<div class="a" style="left:655px;top:3277px;font-size:12px;color:#ccc">▽</div>
<div class="a" style="left:704px;top:3279px;width:12px;height:10px;border:1px solid #ccc"></div>

<div class="a y" style="left:42px;top:3330px;font-size:26px;font-weight:bold">温馨提示：</div>
<div class="a s y" style="left:44px;top:3389px;font-size:27px">1、学习到这一步就可以将蓝牙模块移植到自己的设备上，注意连接</div>
<div class="a s y" style="left:44px;top:3427px;font-size:27px">的方式仍然是UART，串口要交叉连接。<span style="font-size:16px">（资料包里有常用的串口驱动供参考）</span></div>
<div class="a s y" style="left:44px;top:3465px;font-size:27px">2、演示的参数架和软件都是HC开发，如果用其他的工具和程序，也</div>
<div class="a s y" style="left:44px;top:3503px;font-size:27px">是同样的原理，这里就不做一一说明了。</div>
<div class="a s y" style="left:44px;top:3541px;font-size:27px">3、模块更多功能和AT指令，可以参阅HC-02使用规格书！</div>

<div class="a" style="left:7px;top:3633px;width:738px;height:204px;background:#fe0000;border-radius:7px"></div>
<div class="a s" style="left:26px;top:3654px;font-size:33px;color:#fff">没有参数架，如何设置AT指令？</div>
<div class="a s" style="left:68px;top:3697px;font-size:26px;color:#fff">将模块连接设备（连接VCC/GND/RXD/TXD四个脚即可，串口需交</div>
<div class="a s" style="left:26px;top:3735px;font-size:26px;color:#fff">叉连接），把设备假设成PC，向模块串口发送AT指令即可（操作方法同</div>
<div class="a s" style="left:26px;top:3772px;font-size:26px;color:#fff">上文第三点）。发送完成，查看模块返回的信息，验证是否成功。</div>
</body></html>
